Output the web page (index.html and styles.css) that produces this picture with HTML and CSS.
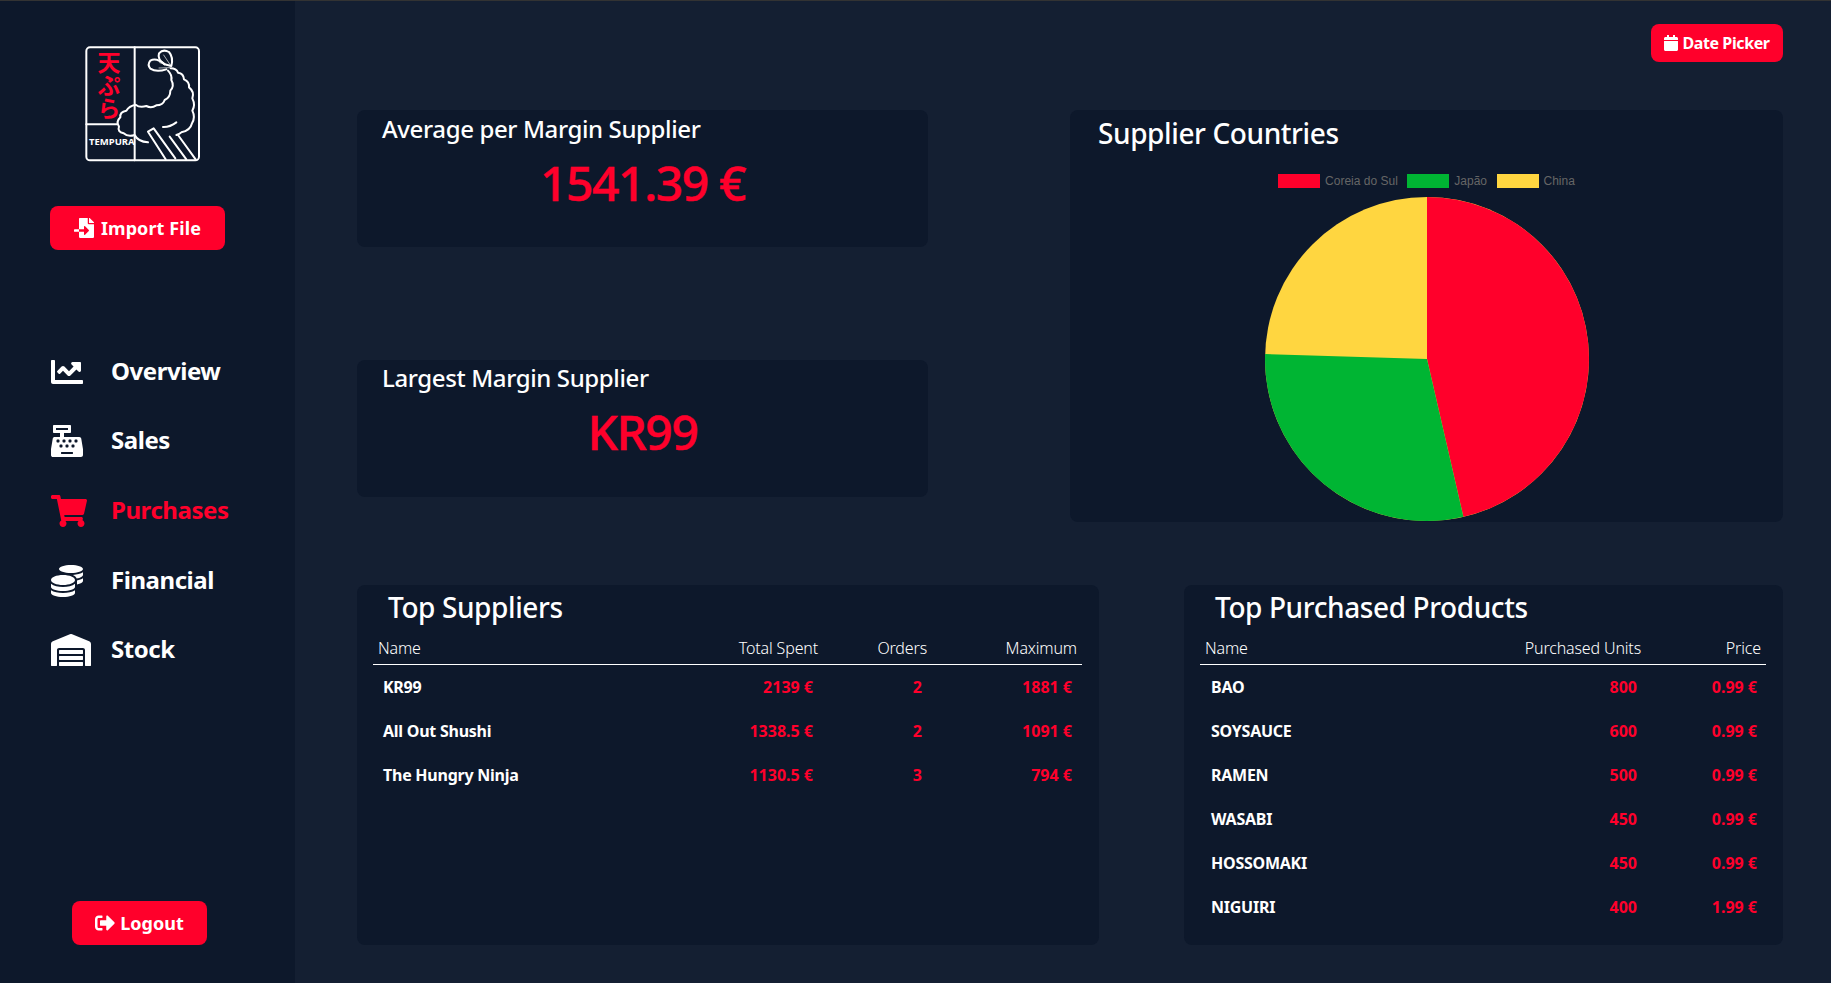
FILE: index.html
```html
<!DOCTYPE html>
<html lang="en">
<head>
<meta charset="utf-8">
<title>Tempura Dashboard</title>
<link rel="stylesheet" href="styles.css">
</head>
<body>
<div class="app">
  <aside class="sidebar">
    <div class="logo">
      <svg class="logo-art" viewBox="250 132 360 360" width="120" height="120" fill="none" stroke="#fff" stroke-width="6" stroke-linecap="round" stroke-linejoin="round">
        <rect x="260" y="142" width="338" height="339" rx="11"/>
        <path d="M405 142V481M260 373H352"/>
        <path d="M513 205Q530 205 535 218Q552 220 553 238Q570 245 568 262Q585 275 578 295Q588 315 578 332Q588 352 577 370Q572 392 545 397Q540 402 530 405"/>
        <path d="M505 212Q518 225 515 240Q525 258 512 272Q512 292 495 300Q490 316 470 316Q455 326 440 318Q420 324 408 314Q388 318 380 332Q360 335 362 352Q348 365 358 380Q352 395 372 400Q385 412 405 405Q415 425 445 427"/>
        <path d="M490 381Q510 382 530 367"/>
        <path d="M498 478L445 395L462 385L527 475M560 478L510 410M588 478L535 405"/>
        <path d="M515 198Q522 172 508 156Q490 146 478 160Q472 178 495 193Z"/>
        <path d="M495 193Q470 172 452 182Q442 194 452 206Q470 218 500 208"/>
        <path d="M492 165L512 195M480 188L514 199M478 204L510 203" stroke-width="2"/>
      </svg>
      <span class="logo-kanji">天ぷら</span>
      <span class="logo-word">TEMPURA</span>
    </div>
    <button class="btn btn-import" type="button">
      <svg class="ico" viewBox="0 0 512 512"><path d="M16 288c-8.800 0-16 7.200-16 16v32c0 8.800 7.200 16 16 16h112v-64zm489-183L407.100 7c-4.500-4.500-10.600-7-17-7H384v128h128v-6.100c0-6.300-2.500-12.400-7-16.900zm-153 31V0H152c-13.300 0-24 10.700-24 24v264h128v-65.200c0-14.300 17.300-21.400 27.400-11.300L379 308c6.600 6.700 6.600 17.400 0 24l-95.700 96.400c-10.100 10.100-27.400 3-27.400-11.300V352H128v136c0 13.300 10.700 24 24 24h336c13.300 0 24-10.700 24-24V160H376c-13.200 0-24-10.800-24-24z"/></svg>
      <span>Import File</span>
    </button>
    <nav class="nav">
      <a class="nav-item">
        <span class="nav-icon"><svg width="32" height="32" viewBox="0 0 512 512"><path d="M496 384H64V80c0-8.840-7.160-16-16-16H16C7.160 64 0 71.160 0 80v336c0 17.670 14.330 32 32 32h464c8.840 0 16-7.160 16-16v-32c0-8.840-7.160-16-16-16zM464 96H345.940c-21.380 0-32.090 25.850-16.970 40.970l32.400 32.400L288 242.750l-73.370-73.370c-12.500-12.500-32.760-12.500-45.250 0l-68.690 68.690c-6.250 6.250-6.250 16.380 0 22.630l22.620 22.620c6.250 6.250 16.380 6.250 22.630 0L192 237.250l73.370 73.370c12.500 12.500 32.760 12.500 45.250 0l96-96 32.400 32.400c15.120 15.120 40.970 4.410 40.970-16.970V112c.01-8.840-7.150-16-15.990-16z"/></svg></span>
        <span class="nav-label">Overview</span>
      </a>
      <a class="nav-item">
        <span class="nav-icon"><svg width="32" height="32" viewBox="0 0 512 512"><path d="M511.100 378.800l-26.700-160c-2.600-15.400-15.900-26.700-31.600-26.700H208v-64h96c8.800 0 16-7.200 16-16V16c0-8.800-7.200-16-16-16H48c-8.800 0-16 7.200-16 16v96c0 8.800 7.200 16 16 16h96v64H59.100c-15.600 0-29 11.300-31.600 26.700L.8 378.700c-.6 3.500-.9 7-.9 10.500V480c0 17.700 14.300 32 32 32h448c17.700 0 32-14.300 32-32v-90.700c.1-3.500-.2-7-.8-10.500zM280 248c0-8.800 7.200-16 16-16h16c8.800 0 16 7.200 16 16v16c0 8.800-7.200 16-16 16h-16c-8.800 0-16-7.200-16-16v-16zm-32 64h16c8.800 0 16 7.200 16 16v16c0 8.800-7.200 16-16 16h-16c-8.800 0-16-7.200-16-16v-16c0-8.800 7.200-16 16-16zm-32-80c8.800 0 16 7.200 16 16v16c0 8.800-7.200 16-16 16h-16c-8.800 0-16-7.200-16-16v-16c0-8.800 7.200-16 16-16h16zM80 80V48h192v32H80zm40 200h-16c-8.800 0-16-7.200-16-16v-16c0-8.800 7.200-16 16-16h16c8.800 0 16 7.200 16 16v16c0 8.800-7.200 16-16 16zm16 64v-16c0-8.800 7.200-16 16-16h16c8.800 0 16 7.200 16 16v16c0 8.800-7.200 16-16 16h-16c-8.800 0-16-7.200-16-16zm216 112c0 4.400-3.600 8-8 8H168c-4.400 0-8-3.600-8-8v-16c0-4.400 3.600-8 8-8h176c4.400 0 8 3.600 8 8v16zm24-112c0 8.800-7.200 16-16 16h-16c-8.800 0-16-7.200-16-16v-16c0-8.800 7.200-16 16-16h16c8.800 0 16 7.200 16 16v16zm48-80c0 8.800-7.200 16-16 16h-16c-8.800 0-16-7.200-16-16v-16c0-8.800 7.200-16 16-16h16c8.800 0 16 7.200 16 16v16z"/></svg></span>
        <span class="nav-label">Sales</span>
      </a>
      <a class="nav-item is-active">
        <span class="nav-icon"><svg width="36" height="32" viewBox="0 0 576 512"><path d="M528.120 301.319l47.273-208C578.806 78.301 567.391 64 551.990 64H159.208l-9.166-44.810C147.758 8.021 137.930 0 126.529 0H24C10.745 0 0 10.745 0 24v16c0 13.255 10.745 24 24 24h69.883l70.248 343.435C147.325 417.100 136 435.222 136 456c0 30.928 25.072 56 56 56s56-25.072 56-56c0-15.674-6.447-29.835-16.824-40h209.647C430.447 426.165 424 440.326 424 456c0 30.928 25.072 56 56 56s56-25.072 56-56c0-22.172-12.888-41.332-31.579-50.405l5.517-24.276c3.413-15.018-8.002-29.319-23.403-29.319H218.117l-6.545-32h293.145c11.206 0 20.920-7.754 23.403-18.681z"/></svg></span>
        <span class="nav-label">Purchases</span>
      </a>
      <a class="nav-item">
        <span class="nav-icon"><svg width="32" height="32" viewBox="0 0 512 512"><path d="M0 405.300V448c0 35.300 86 64 192 64s192-28.700 192-64v-42.700C342.700 434.400 267.200 448 192 448S41.300 434.400 0 405.300zM320 128c106 0 192-28.700 192-64S426 0 320 0 128 28.700 128 64s86 64 192 64zM0 300.400V352c0 35.300 86 64 192 64s192-28.700 192-64v-51.600c-41.300 34-116.900 51.600-192 51.600S41.300 334.400 0 300.400zm416 11c57.300-11.100 96-31.700 96-55.400v-42.700c-23.200 16.400-57.300 27.600-96 34.500v63.600zM192 160C86 160 0 195.800 0 240s86 80 192 80 192-35.800 192-80-86-80-192-80zm219.300 56.300c60-10.800 100.700-32 100.700-56.300v-42.700c-35.500 25.100-96.500 38.600-160.700 41.800 29.500 14.300 51.200 33.500 60 57.200z"/></svg></span>
        <span class="nav-label">Financial</span>
      </a>
      <a class="nav-item">
        <span class="nav-icon"><svg width="40" height="32" viewBox="0 0 640 512"><path d="M504 352H136.400c-4.400 0-8 3.600-8 8l-.1 48c0 4.400 3.600 8 8 8H504c4.400 0 8-3.600 8-8v-48c0-4.400-3.600-8-8-8zm0 96H136.100c-4.400 0-8 3.600-8 8l-.1 48c0 4.400 3.600 8 8 8h368c4.400 0 8-3.600 8-8v-48c0-4.400-3.600-8-8-8zm0-192H136.600c-4.400 0-8 3.600-8 8l-.1 48c0 4.400 3.600 8 8 8H504c4.400 0 8-3.600 8-8v-48c0-4.400-3.600-8-8-8zm106.500-139L338.400 3.700a48.150 48.150 0 0 0-36.900 0L29.500 117C11.700 124.500 0 141.900 0 161.300V504c0 4.400 3.600 8 8 8h80c4.400 0 8-3.600 8-8V256c0-17.600 14.600-32 32.600-32h382.800c18 0 32.600 14.400 32.600 32v248c0 4.400 3.600 8 8 8h80c4.400 0 8-3.600 8-8V161.300c0-19.400-11.700-36.800-29.500-44.300z"/></svg></span>
        <span class="nav-label">Stock</span>
      </a>
    </nav>
    <button class="btn btn-logout" type="button">
      <svg class="ico" viewBox="0 0 512 512"><path d="M497 273L329 441c-15 15-41 4.500-41-17v-96H152c-13.300 0-24-10.700-24-24v-96c0-13.300 10.700-24 24-24h136V88c0-21.400 25.900-32 41-17l168 168c9.300 9.400 9.300 24.600 0 34zM192 436v-40c0-6.600-5.400-12-12-12H96c-17.700 0-32-14.300-32-32V160c0-17.700 14.300-32 32-32h84c6.600 0 12-5.400 12-12V76c0-6.600-5.400-12-12-12H96c-53 0-96 43-96 96v192c0 53 43 96 96 96h84c6.600 0 12-5.400 12-12z"/></svg>
      <span>Logout</span>
    </button>
  </aside>
  <main class="main">
    <div class="topbar">
      <button class="btn btn-date" type="button">
        <svg class="ico-cal" viewBox="0 0 448 512"><path d="M12 192h424c6.600 0 12 5.400 12 12v260c0 26.500-21.500 48-48 48H48c-26.500 0-48-21.500-48-48V204c0-6.600 5.400-12 12-12zm436-44v-36c0-26.500-21.500-48-48-48h-48V12c0-6.600-5.400-12-12-12h-40c-6.600 0-12 5.400-12 12v52H160V12c0-6.600-5.400-12-12-12h-40c-6.600 0-12 5.400-12 12v52H48C21.500 64 0 85.500 0 112v36c0 6.600 5.400 12 12 12h424c6.600 0 12-5.400 12-12z"/></svg>
        <span>Date Picker</span>
      </button>
    </div>
    <section class="upper">
      <div class="kpis">
        <div class="card kpi">
          <h3 class="kpi-title">Average per Margin Supplier</h3>
          <p class="kpi-value">1541.39 €</p>
        </div>
        <div class="card kpi">
          <h3 class="kpi-title kpi-title-b">Largest Margin Supplier</h3>
          <p class="kpi-value">KR99</p>
        </div>
      </div>
      <div class="card countries">
        <h2 class="card-title title-countries">Supplier Countries</h2>
        <ul class="legend">
          <li class="legend-item"><i class="swatch swatch-red"></i>Coreia do Sul</li>
          <li class="legend-item"><i class="swatch swatch-green"></i>Japão</li>
          <li class="legend-item"><i class="swatch swatch-yellow"></i>China</li>
        </ul>
        <svg class="pie" viewBox="0 0 324 324" width="324" height="324">
          <circle cx="162" cy="162" r="162" fill="#ffd640"/>
          <path d="M162 162L162 0A162 162 0 0 1 198.400 319.850Z" fill="#ff002b"/>
          <path d="M162 162L198.400 319.850A162 162 0 0 1 0.080 157.030Z" fill="#00b533"/>
        </svg>
      </div>
    </section>
    <section class="lower">
      <div class="card table-card suppliers">
        <h2 class="card-title title-suppliers">Top Suppliers</h2>
        <table class="data">
          <colgroup><col><col class="c-s2"><col class="c-s3"><col class="c-s4"></colgroup>
          <thead><tr><th class="left">Name</th><th>Total Spent</th><th>Orders</th><th>Maximum</th></tr></thead>
          <tbody>
            <tr><td class="left">KR99</td><td>2139 €</td><td>2</td><td>1881 €</td></tr>
            <tr><td class="left">All Out Shushi</td><td>1338.5 €</td><td>2</td><td>1091 €</td></tr>
            <tr><td class="left">The Hungry Ninja</td><td>1130.5 €</td><td>3</td><td>794 €</td></tr>
          </tbody>
        </table>
      </div>
      <div class="card table-card products">
        <h2 class="card-title title-products">Top Purchased Products</h2>
        <table class="data">
          <colgroup><col><col class="c-p2"><col class="c-p3"></colgroup>
          <thead><tr><th class="left">Name</th><th>Purchased Units</th><th>Price</th></tr></thead>
          <tbody>
            <tr><td class="left">BAO</td><td>800</td><td>0.99 €</td></tr>
            <tr><td class="left">SOYSAUCE</td><td>600</td><td>0.99 €</td></tr>
            <tr><td class="left">RAMEN</td><td>500</td><td>0.99 €</td></tr>
            <tr><td class="left">WASABI</td><td>450</td><td>0.99 €</td></tr>
            <tr><td class="left">HOSSOMAKI</td><td>450</td><td>0.99 €</td></tr>
            <tr><td class="left">NIGUIRI</td><td>400</td><td>1.99 €</td></tr>
          </tbody>
        </table>
      </div>
    </section>
  </main>
</div>
</body>
</html>
```
FILE: styles.css
```css
* { box-sizing: border-box; }
html, body { margin: 0; height: 100%; }
body {
  background: #141f32;
  color: #fff;
  font-family: "Noto Sans", "Noto Sans CJK JP", sans-serif;
  overflow: hidden;
}
.app { display: flex; height: 983px; border-top: 1px solid #333; }

/* Sidebar */
.sidebar {
  width: 295px;
  flex: none;
  background: #0d182b;
  display: flex;
  flex-direction: column;
  padding-top: 43px;
}
.logo { position: relative; width: 120px; height: 120px; margin-left: 83px; }
.logo-art { display: block; }
.logo-kanji {
  position: absolute;
  left: 14px;
  top: 7px;
  width: 24px;
  writing-mode: vertical-rl;
  font-family: "Noto Sans CJK JP", sans-serif;
  font-weight: 700;
  font-size: 23px;
  line-height: 24px;
  color: #ff002b;
}
.logo-word {
  position: absolute;
  left: 6px;
  top: 92px;
  font-size: 9.5px;
  line-height: 12px;
  font-weight: 700;
}
.btn {
  display: flex;
  align-items: center;
  justify-content: center;
  border: 0;
  border-radius: 8px;
  background: #ff002b;
  color: #fff;
  font-family: inherit;
  font-weight: 700;
}
.ico { width: 20px; height: 20px; fill: #fff; flex: none; }
.btn-import {
  width: 175px;
  height: 44px;
  margin: 42px 0 0 50px;
  gap: 7px;
  font-size: 18px;
  letter-spacing: 0.1px;
}
.nav { display: flex; flex-direction: column; margin-top: 87px; }
.nav-item {
  display: flex;
  align-items: center;
  height: 69.6px;
  padding-left: 51px;
  font-size: 24px;
  font-weight: 700;
  letter-spacing: -0.45px;
  color: #fff;
}
.nav-item svg { display: block; fill: currentColor; }
.nav-icon { width: 60px; flex: none; }
.nav-label { margin-bottom: 3px; }
.is-active { color: #ff002b; }
.btn-logout {
  width: 135px;
  height: 44px;
  margin: auto 0 38px 72px;
  gap: 5px;
  font-size: 18px;
}

/* Main */
.main { flex: 1; min-width: 0; padding: 23px 48px 0 62px; }
.topbar { display: flex; justify-content: flex-end; }
.btn-date { width: 132px; height: 38px; gap: 4px; font-size: 16px; letter-spacing: -0.4px; }
.ico-cal { width: 14px; height: 16px; fill: #fff; flex: none; }
.card { background: #0d182b; border-radius: 8px; }
.upper { display: flex; justify-content: space-between; margin-top: 48px; }
.kpis { width: 571px; display: flex; flex-direction: column; gap: 113px; }
.kpi { height: 137px; padding-top: 2px; }
.kpi-title {
  margin: 0;
  padding-left: 25px;
  font-size: 24px;
  line-height: 33px;
  font-weight: 500;
  letter-spacing: -0.38px;
}
.kpi-title-b { margin: -1px 0 1px; }
.kpi-value {
  margin: 5px 0 0;
  text-align: center;
  font-size: 48px;
  line-height: 66px;
  font-weight: 500;
  color: #ff002b;
  letter-spacing: -1.4px;
  -webkit-text-stroke: 0.5px #ff002b;
}
.countries { width: 713px; height: 412px; }
.card-title { margin: 0; font-size: 28px; line-height: 38px; font-weight: 500; letter-spacing: -0.4px; }
.title-countries { padding: 4px 0 0 28px; }
.legend {
  list-style: none;
  margin: 22px 0 0;
  padding: 0;
  display: flex;
  justify-content: center;
  gap: 9.5px;
  height: 14px;
}
.legend-item {
  display: flex;
  align-items: center;
  gap: 5px;
  font-family: "Liberation Sans", sans-serif;
  font-size: 12px;
  color: #666;
}
.swatch { display: block; width: 42px; height: 14px; }
.swatch-red { background: #ff002b; }
.swatch-green { background: #00b533; }
.swatch-yellow { background: #ffd640; }
.pie { display: block; margin: 9px auto 0; }

.lower { display: flex; justify-content: space-between; margin-top: 63px; }
.table-card { height: 360px; padding: 3px 17px 0 16px; }
.suppliers { width: 742px; }
.products { width: 599px; }
.title-suppliers { padding-left: 15px; }
.title-products { padding-left: 15px; }
.data { width: 100%; table-layout: fixed; border-collapse: collapse; margin-top: 7px; }
.c-s2 { width: 129px; }
.c-s3 { width: 109px; }
.c-s4 { width: 150px; }
.c-p2 { width: 200px; }
.c-p3 { width: 120px; }
.data th {
  height: 31px;
  padding: 0 5px;
  text-align: right;
  font-size: 16px;
  font-weight: 300;
  letter-spacing: -0.15px;
  border-bottom: 1px solid #fff;
}
.data td {
  height: 44px;
  padding: 2px 10px 0;
  text-align: right;
  font-size: 16px;
  font-weight: 700;
  letter-spacing: 0;
  color: #ff002b;
}
.products .data td { padding-right: 9px; }
.data th.left { text-align: left; }
.data td.left { text-align: left; color: #fff; letter-spacing: -0.25px; }
.products .data td.left { padding-left: 11px; }
```
